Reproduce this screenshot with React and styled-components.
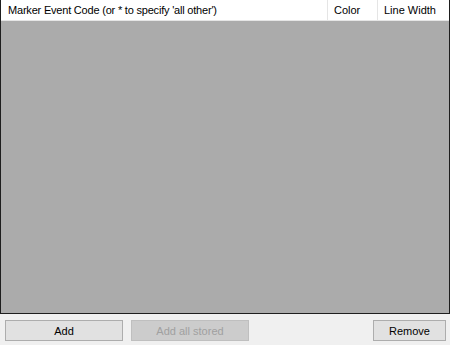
import React from "react";
import styled, { createGlobalStyle } from "styled-components";

const Global = createGlobalStyle`
  html, body { margin: 0; padding: 0; background: #f0f0f0; }
  body { font-family: "Liberation Sans", Arial, sans-serif; }
`;

const Page = styled.div`
  width: 450px;
  height: 345px;
  display: flex;
  flex-direction: column;
  background: #f0f0f0;
  overflow: hidden;
`;

const Grid = styled.div`
  height: 313px;
  border-left: 1px solid #1e1e1e;
  border-right: 1px solid #1e1e1e;
  border-bottom: 1px solid #1e1e1e;
  background: #ababab;
  display: flex;
  flex-direction: column;
`;

const Header = styled.div`
  display: flex;
  height: 20px;
  background: #fff;
  border-bottom: 1px solid #e5e5e5;
`;

const HeaderCell = styled.div`
  box-sizing: border-box;
  width: ${(p) => (p.$w ? `${p.$w}px` : "auto")};
  flex: ${(p) => (p.$w ? "none" : "1")};
  border-right: ${(p) => (p.$last ? "none" : "1px solid #e5e5e5")};
  padding-left: ${(p) => p.$pl}px;
  font-size: 11px;
  letter-spacing: ${(p) => p.$ls || 0}px;
  line-height: 20px;
  color: #000;
  white-space: nowrap;
  overflow: hidden;
`;

const Bar = styled.div`
  display: flex;
  align-items: flex-start;
  padding: 6px 4px 0 5px;
  gap: 8px;
`;

const Button = styled.button`
  box-sizing: border-box;
  width: ${(p) => p.$w}px;
  height: 21px;
  border: 1px solid ${(p) => (p.disabled ? "#bfbfbf" : "#adadad")};
  background: ${(p) => (p.disabled ? "#cccccc" : "#e1e1e1")};
  color: ${(p) => (p.disabled ? "#a0a0a0" : "#000")};
  font-family: "Liberation Sans", Arial, sans-serif;
  font-size: 11px;
  padding: 0;
  margin: 0;
  margin-left: ${(p) => (p.$push ? "auto" : "0")};
`;

export default function App() {
  return (
    <Page>
      <Global />
      <Grid>
        <Header>
          <HeaderCell $w={327} $pl={7} $ls={-0.2}>
            Marker Event Code (or * to specify 'all other')
          </HeaderCell>
          <HeaderCell $w={50} $pl={6}>Color</HeaderCell>
          <HeaderCell $last $pl={6}>Line Width</HeaderCell>
        </Header>
      </Grid>
      <Bar>
        <Button $w={118}>Add</Button>
        <Button $w={118} disabled>Add all stored</Button>
        <Button $w={73} $push>Remove</Button>
      </Bar>
    </Page>
  );
}
